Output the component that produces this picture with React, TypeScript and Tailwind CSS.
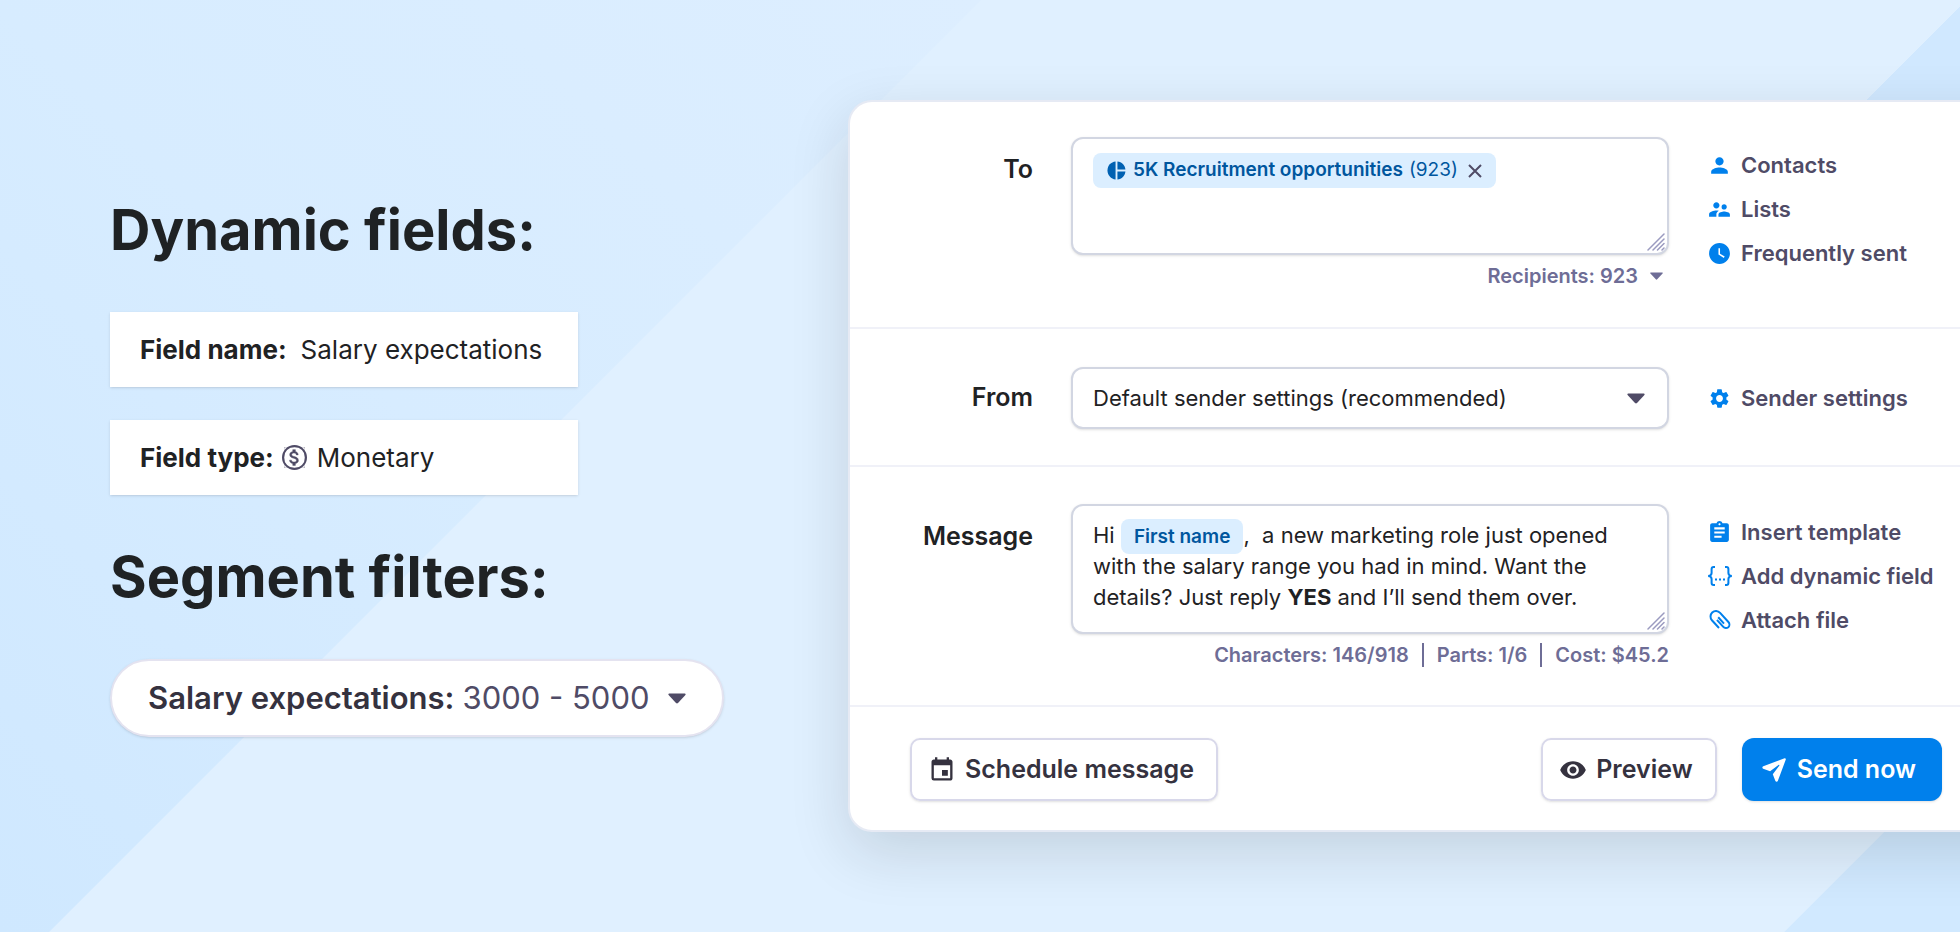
import { ReactNode } from "react";
import {
  MdAssignment,
  MdAttachMoney,
  MdEvent,
  MdPerson,
  MdSettings,
  MdSupervisorAccount,
  MdVisibility,
  MdWatchLater,
} from "react-icons/md";

function Caret({ className }: { className: string }) {
  return (
    <svg viewBox="0 0 18 11" className={className} fill="currentColor" aria-hidden="true">
      <path d="M1.2 0.5h15.600c.8 0 1.100.8.6 1.400L10 10.100c-.6.6-1.400.6-2 0L.6 1.900C.1 1.300.4.5 1.200.5z" />
    </svg>
  );
}

function ResizeGrip() {
  return (
    <svg
      viewBox="0 0 18 18"
      className="absolute right-[2px] bottom-[2px] size-[18px] text-[#9b9bc0]"
      stroke="currentColor"
      strokeWidth="1.5"
      strokeLinecap="round"
      aria-hidden="true"
    >
      <path d="M1 17L17 1M6 17L17 6M10.500 17L17 10.500M15 17L17 15" />
    </svg>
  );
}

function PieIcon() {
  return (
    <svg viewBox="0 0 20 20" className="size-[19px]" fill="#0061b2" aria-hidden="true">
      <path d="M9 0.600V19.400C4.200 19 0.500 15 0.500 10S4.200 1 9 0.600z" />
      <path d="M11 0.600C15.500 1 19 4.600 19.400 9H11z" />
      <path d="M11 11H19.400C19 15.400 15.500 19 11 19.400z" />
    </svg>
  );
}

function BracesIcon() {
  return (
    <svg viewBox="0 0 26 22" className="h-[22px] w-[26px] shrink-0" fill="none" stroke="currentColor" strokeWidth="2" aria-hidden="true">
      <path d="M8 2H6.600C5.300 2 4.600 2.700 4.600 4V8C4.600 9.800 3.600 10.800 1.200 11C3.600 11.200 4.600 12.200 4.600 14V18C4.600 19.300 5.300 20 6.600 20H8" />
      <path d="M18 2H19.400C20.700 2 21.400 2.700 21.400 4V8C21.400 9.800 22.400 10.800 24.800 11C22.400 11.200 21.400 12.200 21.400 14V18C21.400 19.300 20.700 20 19.400 20H18" />
      <path d="M8 14.600h2M12 14.600h2M16 14.600h2" />
    </svg>
  );
}

function ClipIcon() {
  return (
    <svg viewBox="0 0 22 22" className="size-[22px] shrink-0" fill="none" stroke="currentColor" strokeWidth="2" aria-hidden="true">
      <path d="M10 19L2.900 11.300C1 9.200 1 5.600 3.200 3.500C5.500 1.300 9 1.500 11.100 3.900L19.400 13C20.800 14.600 20.700 16.900 19.300 18.200C17.800 19.500 15.600 19.400 14.300 17.900L8.100 11.100" />
      <path d="M8.100 11.100L7.900 10.900M9.200 8.300L15 14.600" />
    </svg>
  );
}

function SendIcon() {
  return (
    <svg viewBox="0 0 24 24" className="size-6" fill="currentColor" aria-hidden="true">
      <path d="M22.600 0.300C23.400 0.100 24 0.700 23.800 1.500L15.900 22.700C15.500 23.900 13.900 24 13.300 22.800L10.800 16.200L17.400 7.400C17.600 7 17.200 6.600 16.800 6.800L8.100 13.300L1.200 10.800C0 10.200 0.100 8.600 1.300 8.200z" />
    </svg>
  );
}

function DollarIcon() {
  return (
    <span className="flex size-[25px] items-center justify-center rounded-full border-2 border-[#4f4b66] text-[#4f4b66]">
      <MdAttachMoney className="size-[21px] shrink-0" stroke="currentColor" strokeWidth="0.5" aria-hidden="true" />
    </span>
  );
}

function ActionLink({ icon, children }: { icon: ReactNode; children: string }) {
  return (
    <a href="#" className="flex items-center gap-[9px] text-[22px] leading-7 font-semibold whitespace-nowrap text-[#4f4b66]">
      <span className="flex w-[25px] items-center justify-center text-[#0080ec]">{icon}</span>
      {children}
    </a>
  );
}

const ROW = "grid grid-cols-[183px_minmax(0,1fr)_253px] gap-x-[38px] border-b-2 border-[#f0f1f8] pr-20";
const LABEL = "text-right text-[25px] font-semibold text-[#1f2224]";
const FIELD = "w-full rounded-xl border-2 border-[#d2d6e2] bg-white shadow-sm";
const BUTTON = "flex h-[63px] items-center text-[25px] font-semibold whitespace-nowrap shadow-sm";

function FieldCard({ label, children }: { label: string; children: ReactNode }) {
  return (
    <div className="flex h-[75px] items-center bg-white pl-[30px] text-[26px] text-[#1f2224] shadow-sm">
      <dt className="font-bold">{label}</dt>
      <dd className="flex items-center">{children}</dd>
    </div>
  );
}

export default function App() {
  return (
    <main className="flex min-h-screen items-start overflow-hidden bg-[linear-gradient(135deg,transparent_51.5%,#d0e8ff_51.6%),linear-gradient(135deg,transparent_33.9%,#e0f0ff_33.95%,#e0f0ff_93.9%,#d1e9ff_93.95%),linear-gradient(45deg,#cfe8ff_0%,#d7ecff_32%,#ddeeff_66%)] bg-[length:200px_200px,100%_100%,100%_100%] bg-[position:right_top,left_top,left_top] bg-no-repeat font-['Inter',sans-serif]">
      <section className="w-[848px] shrink-0 pt-[196px] pl-[110px]">
        <h1 className="text-[56px] leading-[68px] font-bold text-[#1f2224]">Dynamic fields:</h1>
        <dl className="mt-12 flex w-[468px] flex-col gap-[33px]">
          <FieldCard label="Field name:">
            <span className="ml-3.5">Salary expectations</span>
          </FieldCard>
          <FieldCard label="Field type:">
            <span className="ml-2">
              <DollarIcon />
            </span>
            <span className="ml-2.5">Monetary</span>
          </FieldCard>
        </dl>
        <h2 className="mt-12 text-[56px] leading-[68px] font-bold text-[#1f2224]">Segment filters:</h2>
        <button
          type="button"
          className="mt-12 flex h-[78px] w-[614px] items-center rounded-full border-2 border-[#e4e3f0] bg-white pl-9 text-[31px] whitespace-nowrap text-[#4f4b66] shadow-sm"
        >
          <span className="font-semibold text-[#35323f]">Salary expectations:</span>
          <span className="ml-2">3000 - 5000</span>
          <Caret className="ml-[18px] h-[11px] w-[18px]" />
        </button>
      </section>

      <form className="mt-[100px] -mr-20 min-w-0 flex-1 rounded-l-3xl border-2 border-r-0 border-[#e6eaf4] bg-white shadow-[0_20px_60px_rgba(20,30,30,0.14)]">
        <div className={`${ROW} pt-[35px] pb-[37px]`}>
          <label htmlFor="to" className={`${LABEL} mt-4 leading-8`}>
            To
          </label>
          <div>
            <div className={`${FIELD} relative flex h-[118px] items-start pt-3.5 pl-5`}>
              <span className="flex h-[35px] items-center rounded-lg bg-[#dbeeff] px-3.5 text-[19px] whitespace-nowrap text-[#00569e]">
                <PieIcon />
                <span className="ml-[7px] font-semibold">5K Recruitment opportunities</span>
                <span className="ml-1.5">(923)</span>
                <button type="button" aria-label="Remove recipient list" className="ml-2.5 text-[#4f4b66]">
                  <svg viewBox="0 0 14 14" className="size-3.5" stroke="currentColor" strokeWidth="2" aria-hidden="true">
                    <path d="M1 1L13 13M13 1L1 13" />
                  </svg>
                </button>
              </span>
              <input id="to" className="h-[35px] min-w-0 flex-1 bg-transparent pl-2 text-[19px] outline-none" />
              <ResizeGrip />
            </div>
            <button type="button" className="mt-[7px] mr-1.5 ml-auto flex items-center text-xl leading-7 font-semibold text-[#6e6d96]">
              Recipients: 923
              <Caret className="ml-3 h-2 w-[13px]" />
            </button>
          </div>
          <div className="mt-3.5 flex flex-col gap-4">
            <ActionLink icon={<MdPerson className="size-[25px]" />}>Contacts</ActionLink>
            <ActionLink icon={<MdSupervisorAccount className="size-[25px]" />}>Lists</ActionLink>
            <ActionLink icon={<MdWatchLater className="size-[25px]" />}>Frequently sent</ActionLink>
          </div>
        </div>

        <div className={`${ROW} items-center pt-[38px] pb-9`}>
          <label htmlFor="from" className={LABEL}>
            From
          </label>
          <div className="relative">
            <select id="from" className={`${FIELD} h-[62px] appearance-none pl-5 text-[22px] text-[#1f2224]`}>
              <option>Default sender settings (recommended)</option>
            </select>
            <Caret className="pointer-events-none absolute top-[26px] right-6 h-[11px] w-[18px] text-[#4f4b66]" />
          </div>
          <ActionLink icon={<MdSettings className="size-[23px]" />}>Sender settings</ActionLink>
        </div>

        <div className={`${ROW} pt-[37px] pb-9`}>
          <span id="message-label" className={`${LABEL} mt-4 leading-8`}>
            Message
          </span>
          <div>
            <div
              role="textbox"
              aria-multiline="true"
              aria-labelledby="message-label"
              tabIndex={0}
              className={`${FIELD} relative h-[130px] pt-3.5 pl-5 text-[22px] leading-[31px] whitespace-nowrap text-[#1f2224]`}
            >
              <p>
                Hi{" "}
                <span className="-my-1 inline-block rounded-lg bg-[#dbeeff] px-[13px] text-[19px] leading-[35px] font-semibold text-[#00569e]">
                  First name
                </span>
                ,&nbsp; a new marketing role just opened
                <br />
                with the salary range you had in mind. Want the
                <br />
                details? Just reply <strong className="font-bold">YES</strong> and I’ll send them over.
              </p>
              <ResizeGrip />
            </div>
            <p className="mt-[7px] flex justify-end text-xl leading-7 font-semibold whitespace-nowrap text-[#6e6d96]">
              <span>Characters: 146/918</span>
              <span className="mx-[13px] my-0.5 w-0.5 bg-[#6e6d96]" />
              <span>Parts: 1/6</span>
              <span className="mx-[13px] my-0.5 w-0.5 bg-[#6e6d96]" />
              <span>Cost: $45.2</span>
            </p>
          </div>
          <div className="mt-3.5 flex flex-col gap-4">
            <ActionLink icon={<MdAssignment className="size-[25px]" />}>Insert template</ActionLink>
            <ActionLink icon={<BracesIcon />}>Add dynamic field</ActionLink>
            <ActionLink icon={<ClipIcon />}>Attach file</ActionLink>
          </div>
        </div>

        <div className="flex items-center pt-[31px] pr-[98px] pb-[29px] pl-[60px]">
          <button type="button" className={`${BUTTON} rounded-[10px] border-2 border-[#d8d8ea] pr-[22px] pl-4 text-[#35323f]`}>
            <MdEvent className="mr-[9px] size-7" />
            Schedule message
          </button>
          <button type="button" className={`${BUTTON} ml-auto rounded-[10px] border-2 border-[#d8d8ea] pr-[22px] pl-4 text-[#35323f]`}>
            <MdVisibility className="mr-[9px] size-7" />
            Preview
          </button>
          <button type="submit" className={`${BUTTON} ml-[25px] rounded-xl bg-[#0080ec] pr-[26px] pl-5 text-white`}>
            <span className="mr-[11px]">
              <SendIcon />
            </span>
            Send now
          </button>
        </div>
      </form>
    </main>
  );
}
